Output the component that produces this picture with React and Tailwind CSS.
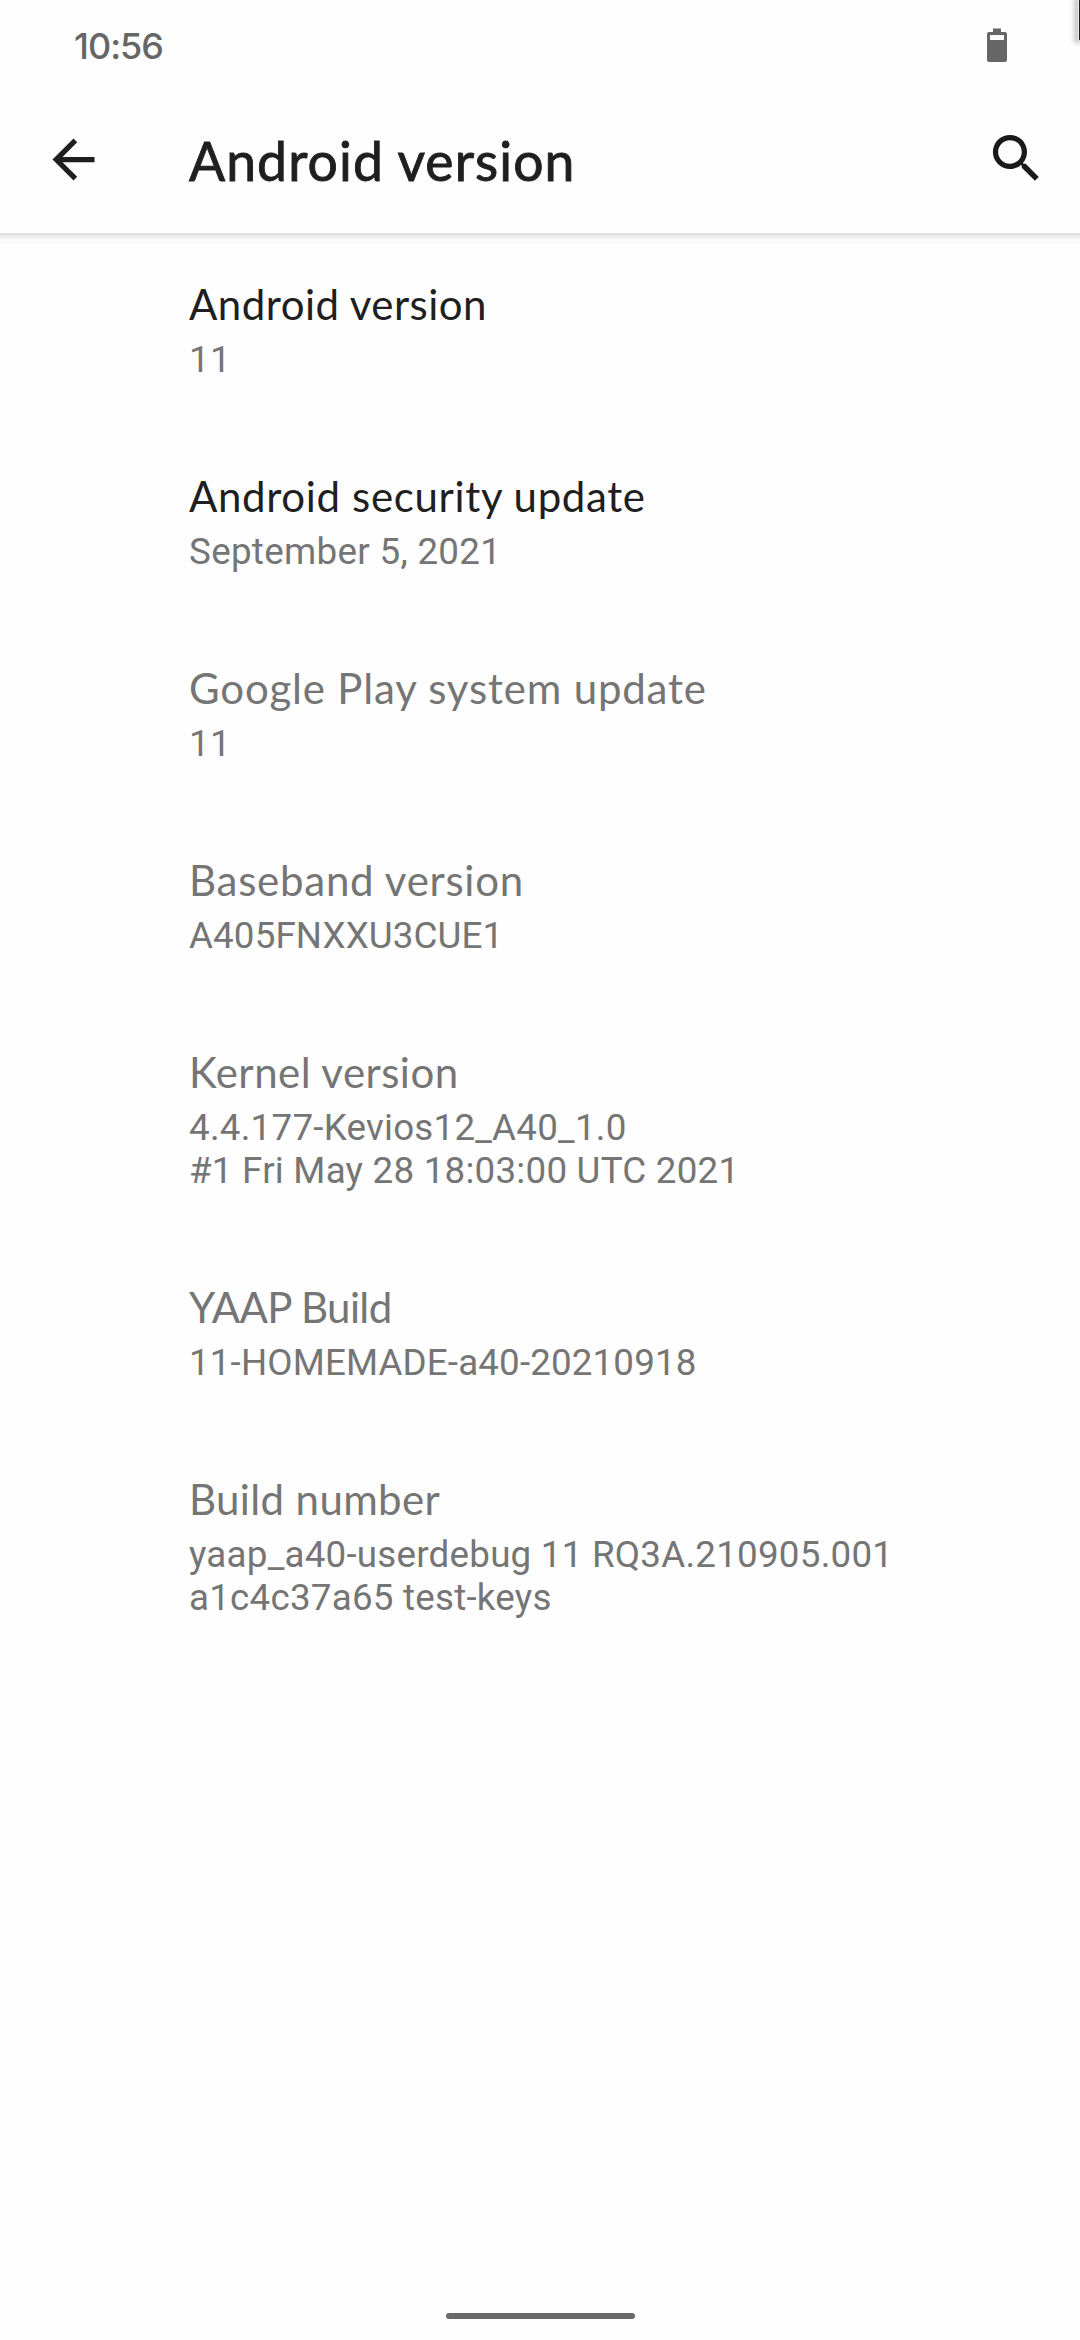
const items = [
  { title: "Android version", lines: ["11"], enabled: true, tracking: "tracking-[0.48px]", sub: "tracking-[0.3px]" },
  { title: "Android security update", lines: ["September 5, 2021"], enabled: true, tracking: "tracking-[0.65px]", sub: "tracking-[0.31px]" },
  { title: "Google Play system update", lines: ["11"], tracking: "tracking-[0.82px]", sub: "tracking-[0.3px]" },
  { title: "Baseband version", lines: ["A405FNXXU3CUE1"], tracking: "tracking-[0.74px]", sub: "tracking-[0.12px]" },
  { title: "Kernel version", lines: ["4.4.177-Kevios12_A40_1.0", "#1 Fri May 28 18:03:00 UTC 2021"], tracking: "tracking-[0.48px]", sub: "tracking-[0.23px]" },
  { title: "YAAP Build", lines: ["11-HOMEMADE-a40-20210918"], tracking: "tracking-[-0.6px]", sub: "tracking-[0.14px]" },
  { title: "Build number", lines: ["yaap_a40-userdebug 11 RQ3A.210905.001", "a1c4c37a65 test-keys"], tracking: "tracking-[0.37px]", sub: "tracking-[0.23px]" },
];

function StatusBar() {
  return (
    <div className="flex h-[94px] items-start justify-between pl-[74px] pr-[73px]">
      <span className="mt-[25px] font-['Inter',sans-serif] text-[36px] font-medium leading-[42px] tracking-[-1px] text-[#666666]">10:56</span>
      <svg className="mt-[28px] h-[34px] w-[20px]" viewBox="0 0 20 34" fill="#666666">
        <path fillRule="evenodd" d="M6 0.5h8V4h4a2 2 0 0 1 2 2v26a2 2 0 0 1-2 2H2a2 2 0 0 1-2-2V6a2 2 0 0 1 2-2h4zM3 7v5h14V7z" />
      </svg>
    </div>
  );
}

function Toolbar() {
  return (
    <div className="flex h-[139px] items-start pl-[42px] pr-[32px]">
      <svg className="mt-[34px] size-[63px] shrink-0" viewBox="0 0 24 24" fill="#1f1f1f">
        <path d="M20 11H7.83l5.59-5.59L12 4l-8 8 8 8 1.41-1.41L7.83 13H20v-2z" />
      </svg>
      <h1 className="ml-[84px] mt-[34px] grow whitespace-nowrap font-['Lato',sans-serif] text-[53.5px] leading-[64px] tracking-[1.07px] text-[#1f1f1f] [-webkit-text-stroke:0.9px_#1f1f1f]">Android version</h1>
      <svg className="mt-[33px] size-[63px] shrink-0" viewBox="0 0 24 24" fill="#1a1a1a">
        <path d="M15.5 14h-.79l-.28-.27A6.471 6.471 0 0 0 16 9.5 6.5 6.5 0 1 0 9.5 16c1.61 0 3.09-.59 4.23-1.57l.27.28v.79l5 4.99L20.49 19l-4.99-5zm-6 0C7.01 14 5 11.99 5 9.5S7.01 5 9.5 5 14 7.01 14 9.5 11.99 14 9.5 14z" />
      </svg>
    </div>
  );
}

function Preference({ item }) {
  return (
    <li className="flex flex-col gap-[9px] pb-[44px] pl-[189px] pt-[46px]">
      <div className={`whitespace-nowrap font-['Lato',sans-serif] text-[42px] leading-[50px] ${item.tracking} ${item.enabled ? "text-[#1f1f1f]" : "text-[#757575]"}`}>
        {item.title}
      </div>
      <div className={`whitespace-nowrap font-['Roboto',sans-serif] text-[36.75px] leading-[43px] text-[#757575] ${item.sub}`}>
        {item.lines.map((line) => (
          <div key={line}>{line}</div>
        ))}
      </div>
    </li>
  );
}

export default function App() {
  return (
    <div className="relative flex h-[2340px] w-[1080px] flex-col overflow-hidden bg-[#fefefe]">
      <header className="h-[233px] shrink-0">
        <StatusBar />
        <Toolbar />
      </header>
      <div className="flex h-[11px] shrink-0 flex-col">
        <div className="h-[2px] bg-[#e1e1e1]" />
        <div className="h-[2px] bg-[#ececec]" />
        <div className="h-[2px] bg-[#f3f3f3]" />
        <div className="h-[5px] bg-[#fafafa]" />
      </div>
      <ul className="-mt-[11px] grow">
        {items.map((item) => (
          <Preference key={item.title} item={item} />
        ))}
      </ul>
      <div className="mb-[21px] flex shrink-0 justify-center">
        <div className="h-[6px] w-[189px] rounded-full bg-[#696969]" />
      </div>
      <div className="absolute right-0 top-0 h-[40px] w-[2px] border-l border-[#f0f0f0] bg-[#1a1a1a] shadow-[-1px_0_5px_3px_rgba(0,0,0,0.22)]" />
    </div>
  );
}
